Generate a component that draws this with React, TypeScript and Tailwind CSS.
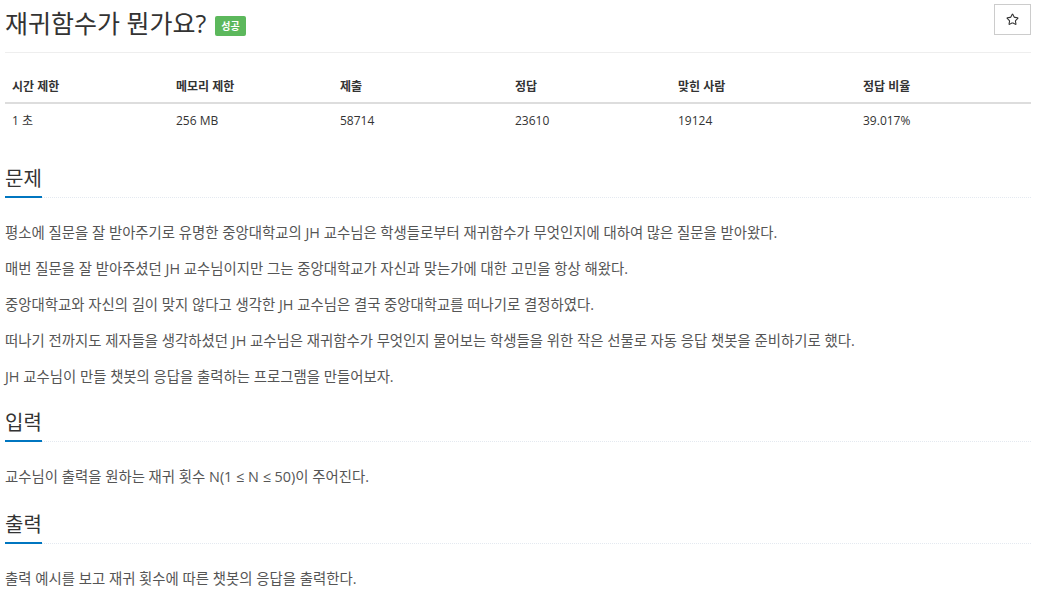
import { Star } from 'lucide-react'

const font = { fontFamily: '"Open Sans", "Noto Sans CJK KR", sans-serif' }

const stats = [
  { label: '시간 제한', value: '1 초', w: 'w-[164px]' },
  { label: '메모리 제한', value: '256 MB', w: 'w-[164px]' },
  { label: '제출', value: '58714', w: 'w-[175px]' },
  { label: '정답', value: '23610', w: 'w-[163px]' },
  { label: '맞힌 사람', value: '19124', w: 'w-[185px]' },
  { label: '정답 비율', value: '39.017%', w: 'flex-1' },
]

function Headline({ title }: { title: string }) {
  return (
    <div className="flex border-b border-dotted border-[#e4e9f0]">
      <h2 className="-mb-px border-b-2 border-[#0076c0] pb-[3px] text-[20px] leading-[28px] text-[#333]">
        {title}
      </h2>
    </div>
  )
}

export default function App() {
  const problem = [
    '평소에 질문을 잘 받아주기로 유명한 중앙대학교의 JH 교수님은 학생들로부터 재귀함수가 무엇인지에 대하여 많은 질문을 받아왔다.',
    '매번 질문을 잘 받아주셨던 JH 교수님이지만 그는 중앙대학교가 자신과 맞는가에 대한 고민을 항상 해왔다.',
    '중앙대학교와 자신의 길이 맞지 않다고 생각한 JH 교수님은 결국 중앙대학교를 떠나기로 결정하였다.',
    '떠나기 전까지도 제자들을 생각하셨던 JH 교수님은 재귀함수가 무엇인지 물어보는 학생들을 위한 작은 선물로 자동 응답 챗봇을 준비하기로 했다.',
    'JH 교수님이 만들 챗봇의 응답을 출력하는 프로그램을 만들어보자.',
  ]

  return (
    <div className="min-h-screen bg-white px-[5px] text-[14.4px] text-[#555]" style={font}>
      <div className="mr-[5px]">
        <div className="flex items-start justify-between border-b border-[#eee] pb-[11px] pt-[4px]">
          <div className="flex items-center pt-[1px]">
            <h1 className="text-[25px] leading-[36px] text-[#333]">재귀함수가 뭔가요?</h1>
            <span className="ml-[9px] mt-[5px] rounded-[2px] bg-[#5cb85c] px-[6px] py-[3px] text-[10px] font-bold leading-[14px] text-white">
              성공
            </span>
          </div>
          <button className="flex h-[31px] w-[37px] items-center justify-center border border-[#ccc] bg-white">
            <Star className="h-[13px] w-[13px] text-[#333]" strokeWidth={2} />
          </button>
        </div>

        <div className="mt-[24px] flex border-b-2 border-[#ddd] text-[12px] font-bold leading-[20px] text-[#333]">
          {stats.map((s) => (
            <div key={s.label} className={`${s.w} px-[7px] pb-[5px]`}>
              {s.label}
            </div>
          ))}
        </div>
        <div className="flex text-[12px] leading-[20px] text-[#333]">
          {stats.map((s) => (
            <div key={s.label} className={`${s.w} px-[7px] py-[7px]`}>
              {s.value}
            </div>
          ))}
        </div>

        <div className="mt-[27px]">
          <Headline title="문제" />
          <div className="mt-[25px] flex flex-col gap-[16px] leading-[20px]">
            {problem.map((p) => (
              <p key={p}>{p}</p>
            ))}
          </div>
        </div>

        <div className="mt-[22px]">
          <Headline title="입력" />
          <p className="mt-[25px] leading-[20px]">교수님이 출력을 원하는 재귀 횟수 N(1 ≤ N ≤ 50)이 주어진다.</p>
        </div>

        <div className="mt-[24px]">
          <Headline title="출력" />
          <p className="mt-[25px] leading-[20px]">출력 예시를 보고 재귀 횟수에 따른 챗봇의 응답을 출력한다.</p>
        </div>
      </div>
    </div>
  )
}
